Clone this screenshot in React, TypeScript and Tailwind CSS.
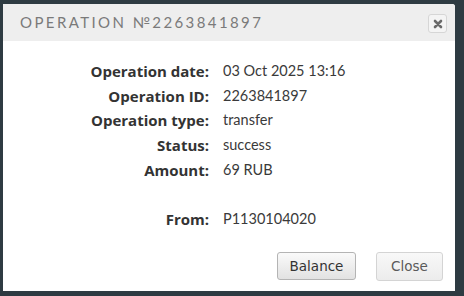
import React from 'react';

const rows: [string, string][] = [
  ['Operation date:', '03 Oct 2025 13:16'],
  ['Operation ID:', '2263841897'],
  ['Operation type:', 'transfer'],
  ['Status:', 'success'],
  ['Amount:', '69 RUB'],
  ['', ''],
  ['From:', 'P1130104020'],
];

export default function App() {
  return (
    <div className="w-[464px] h-[296px] bg-[#2e3b42] pt-[4px] pl-[3px] overflow-hidden">
      <div className="w-[452px] h-[287px] bg-white rounded-tr-[3px] flex flex-col">
        <div className="h-[37px] bg-[#eeeeee] flex items-center justify-between pl-[17px] pr-[8px] rounded-tr-[3px]">
          <h1
            className="text-[15px] tracking-[2.4px] text-[#7a7a7a] uppercase"
            style={{ fontFamily: 'Lato, "Noto Sans", sans-serif' }}
          >
            Operation №2263841897
          </h1>
          <button className="w-[19px] h-[19px] mt-[2px] flex items-center justify-center rounded-[3px] border border-[#d6d6d6] bg-[#f4f4f4]">
            <svg width="10" height="10" viewBox="0 0 10 10">
              <path d="M2 2 L8 8 M8 2 L2 8" stroke="#6a6a6a" strokeWidth="2.6" strokeLinecap="round" />
            </svg>
          </button>
        </div>

        <div className="pt-[18px] grid grid-cols-[206px_1fr] gap-x-[14px] leading-[24.67px]">
          {rows.map(([label, value], i) => (
            <React.Fragment key={i}>
              <div
                className="text-right font-bold text-[15px] text-[#333] h-[24.67px]"
                style={{ fontFamily: '"Open Sans", Lato, sans-serif' }}
              >
                {label}
              </div>
              <div
                className="text-[14.5px] text-[#3a3a3a] h-[24.67px]"
                style={{ fontFamily: 'Lato, "Open Sans", sans-serif' }}
              >
                {value}
              </div>
            </React.Fragment>
          ))}
        </div>

        <div
          className="mt-auto flex justify-end gap-[20px] pr-[12px] pb-[10px]"
          style={{ fontFamily: '"DejaVu Sans", Verdana, sans-serif' }}
        >
          <button className="w-[79px] h-[28px] rounded-[3px] border border-[#b4b4b4] bg-gradient-to-b from-[#fafafa] to-[#e2e2e2] text-[13.5px] text-[#333]">
            Balance
          </button>
          <button className="w-[67px] h-[29px] rounded-[3px] border border-[#d4d4d4] bg-gradient-to-b from-[#f8f8f8] to-[#ececec] text-[13.5px] text-[#5a5a5a]">
            Close
          </button>
        </div>
      </div>
    </div>
  );
}
